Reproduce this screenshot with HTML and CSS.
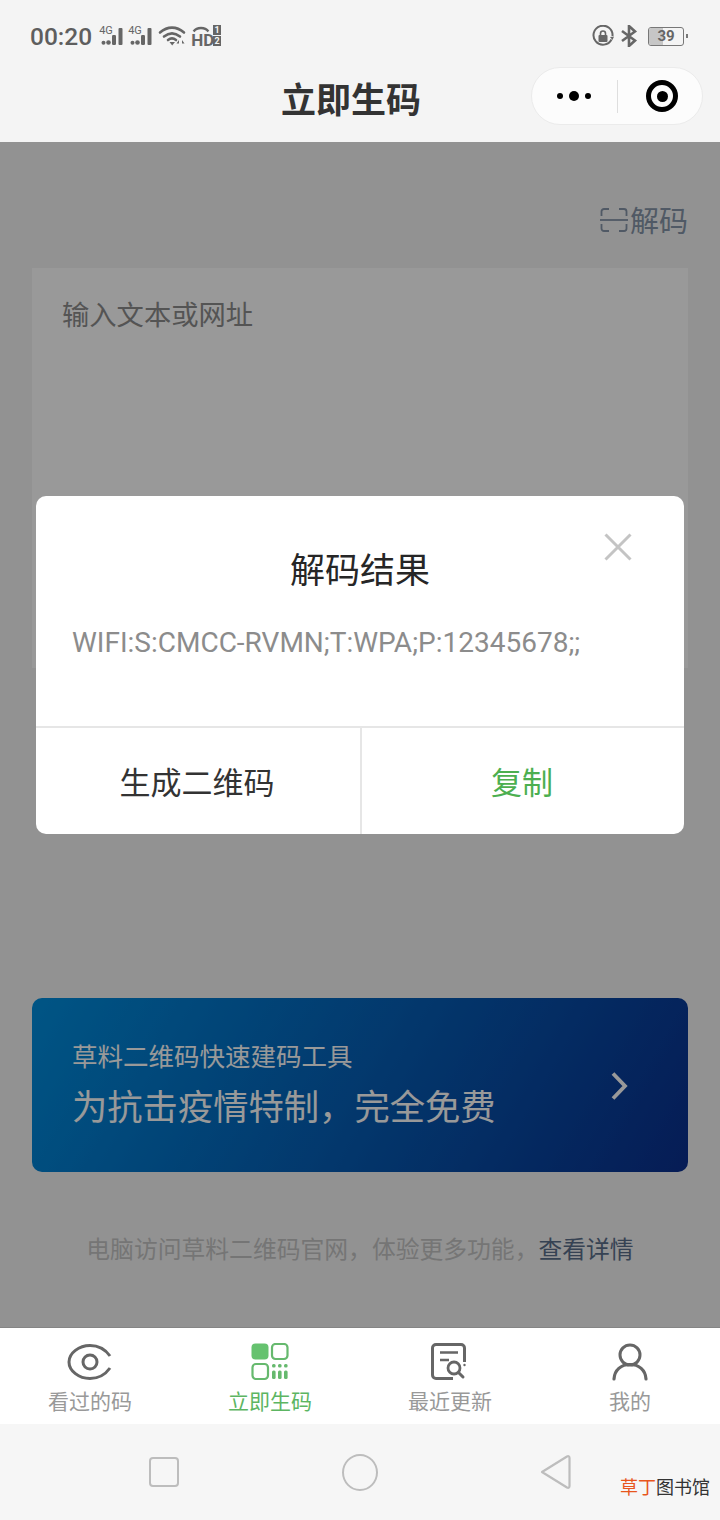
FILE: index.html
```html
<!DOCTYPE html>
<html lang="zh-CN">
<head>
	<meta charset="UTF-8">
	<meta name="viewport" content="width=device-width, initial-scale=1.0">
	<title>立即生码</title>
	<link rel="stylesheet" href="styles.css">
</head>
<body>
	<div class="phone">
		<header class="top">
			<div class="status">
				<span class="time">00:20</span>
				<span class="net"><span class="net-label">4G</span>
					<svg class="bars" viewBox="0 0 22 17"><circle cx="2.500" cy="14.800" r="2"/><circle cx="7.500" cy="14.500" r="2.300"/><rect x="11" y="7" width="4" height="10" rx="1.200"/><rect x="17.500" y="0" width="4" height="17" rx="1"/></svg>
				</span>
				<span class="net"><span class="net-label">4G</span>
					<svg class="bars" viewBox="0 0 22 17"><circle cx="2.500" cy="14.800" r="2"/><circle cx="7.500" cy="14.500" r="2.300"/><rect x="11" y="7" width="4" height="10" rx="1.200"/><rect x="17.500" y="0" width="4" height="17" rx="1"/></svg>
				</span>
				<svg class="wifi" viewBox="0 0 30 22"><path d="M2 7.500C9.500 1 18.500 1 26 7.500M6 11.500C11 7.500 17 7.500 22 11.500M10 15C12.500 13 15.500 13 18 15" fill="none" stroke="#666" stroke-width="2.600" stroke-linecap="round"/><path d="M11.500 17H17L14.200 20.500Z" fill="#666"/><path d="M21 15L18.500 18.500H21V21.500ZM24 15L26.500 18.500H24V21.500Z" fill="#666"/></svg>
				<span class="hd">
					<svg class="hd-arc" viewBox="0 0 22 8"><path d="M2 7C6 1.500 16 1.500 20 7" fill="none" stroke="#666" stroke-width="3"/></svg>
					<span class="hd-text">HD</span>
					<span class="sim"><b>1</b><b>2</b></span>
				</span>
				<span class="status-right">
					<svg class="lock" viewBox="0 0 22 22"><path d="M19.500 14.500A9.500 9.500 0 1 1 20.500 11" fill="none" stroke="#666" stroke-width="2"/><path d="M18 12L20.500 15L22 11.500Z" fill="#666"/><rect x="6.500" y="10" width="9" height="7" rx="1" fill="#666"/><path d="M8.500 10V8.500A2.500 2.500 0 0 1 13.500 8.500V10" fill="none" stroke="#666" stroke-width="1.600"/></svg>
					<svg class="bt" viewBox="0 0 18 22"><path d="M2 6L15 15.500L9 21V1L15 6.500L2 16" fill="none" stroke="#666" stroke-width="2.600"/></svg>
					<span class="battery"><span class="battery-fill"></span><span class="battery-num">39</span></span>
					<span class="battery-tip"></span>
				</span>
			</div>
			<div class="nav">
				<h1 class="nav-title">立即生码</h1>
				<div class="capsule">
					<span class="dots"><i></i><i class="big"></i><i></i></span>
					<span class="capsule-line"></span>
					<span class="target"><i></i></span>
				</div>
			</div>
		</header>

		<main class="content">
			<div class="decode-row">
				<svg class="scan" viewBox="0 0 28 26"><path d="M9 2H4A2.500 2.500 0 0 0 1.500 4.500V9M19 2H24A2.500 2.500 0 0 1 26.500 4.500V9M9 24H4A2.500 2.500 0 0 1 1.500 21.500V17M19 24H24A2.500 2.500 0 0 0 26.500 21.500V17" fill="none" stroke="#8594a8" stroke-width="1.800"/><path d="M0 13H28" stroke="#8594a8" stroke-width="1.800"/></svg>
				<span class="decode-text">解码</span>
			</div>
			<div class="input-box">输入文本或网址</div>
			<div class="banner">
				<div class="banner-text">
					<div class="banner-sub">草料二维码快速建码工具</div>
					<div class="banner-main">为抗击疫情特制，完全免费</div>
				</div>
				<svg class="banner-arrow" viewBox="0 0 18 30"><path d="M3 2.500L15 15L3 27.500" fill="none" stroke="#fff" stroke-width="3.800"/></svg>
			</div>
			<p class="foot-note">电脑访问草料二维码官网，体验更多功能，<span class="foot-link">查看详情</span></p>

			<div class="mask">
				<div class="modal">
					<div class="modal-head">
						<h2 class="modal-title">解码结果</h2>
						<svg class="modal-close" viewBox="0 0 28 28"><path d="M1.500 1.500L26.500 26.500M26.500 1.500L1.500 26.500" stroke="#c4c4c4" stroke-width="3"/></svg>
					</div>
					<div class="modal-body">WIFI:S:CMCC-RVMN;T:WPA;P:12345678;;</div>
					<div class="modal-btns">
						<div class="modal-btn">生成二维码</div>
						<div class="modal-btn green">复制</div>
					</div>
				</div>
			</div>
		</main>

		<nav class="tabs">
			<div class="tab">
				<svg class="tab-icon" viewBox="0 0 46 38"><path d="M43 25C38 32 31 35.500 23 35.500C12 35.500 2 28 2 19C2 10 12 2.500 23 2.500C31 2.500 38 6 43 13" fill="none" stroke="#666" stroke-width="3"/><circle cx="23" cy="19" r="7" fill="none" stroke="#666" stroke-width="3"/></svg>
				<span class="tab-label">看过的码</span>
			</div>
			<div class="tab active">
				<svg class="tab-icon" viewBox="0 0 38 38"><rect x="0.500" y="0.500" width="17" height="16" rx="4" fill="#66c26f"/><rect x="21" y="1" width="15.500" height="15" rx="3.500" fill="none" stroke="#66b96e" stroke-width="2.200"/><rect x="1.500" y="21" width="15.500" height="15" rx="3.500" fill="none" stroke="#66b96e" stroke-width="2.200"/><g fill="#66b96e"><rect x="21" y="21" width="3.600" height="3.600" rx="1.500"/><rect x="21" y="27.500" width="3.600" height="8.500" rx="1.500"/><rect x="27" y="21" width="3.600" height="3.600" rx="1.500"/><rect x="27" y="27.500" width="3.600" height="8.500" rx="1.500"/><rect x="33" y="21" width="3.600" height="3.600" rx="1.500"/><rect x="33" y="27.500" width="3.600" height="8.500" rx="1.500"/></g></svg>
				<span class="tab-label">立即生码</span>
			</div>
			<div class="tab">
				<svg class="tab-icon" viewBox="0 0 38 38"><path d="M22 35.500H5A3.500 3.500 0 0 1 1.500 32V5A3.500 3.500 0 0 1 5 1.500H30A3.500 3.500 0 0 1 33.500 5V19" fill="none" stroke="#666" stroke-width="3"/><path d="M9 9.500H27M9 17H18" stroke="#666" stroke-width="2.600"/><circle cx="23" cy="25" r="6" fill="none" stroke="#666" stroke-width="2.800"/><path d="M27.500 29.500L32 34" stroke="#666" stroke-width="3" stroke-linecap="round"/><circle cx="33.500" cy="22" r="1.200" fill="#666"/></svg>
				<span class="tab-label">最近更新</span>
			</div>
			<div class="tab">
				<svg class="tab-icon" viewBox="0 0 36 38"><circle cx="18" cy="12" r="10" fill="none" stroke="#666" stroke-width="3"/><path d="M2 36C2.500 27 9 21.500 18 21.500C27 21.500 33.500 27 34 36" fill="none" stroke="#666" stroke-width="3.200" stroke-linecap="round"/></svg>
				<span class="tab-label">我的</span>
			</div>
		</nav>

		<footer class="sys-nav">
			<span class="sys-square"></span>
			<span class="sys-circle"></span>
			<svg class="sys-back" viewBox="0 0 32 36"><path d="M2 18L27 2.500C28.500 1.700 29.500 2.500 29.500 4V32C29.500 33.500 28.500 34.300 27 33.500Z" fill="none" stroke="#bdbdbd" stroke-width="2.200" stroke-linejoin="round"/></svg>
			<span class="watermark"><span class="watermark-red">草丁</span>图书馆</span>
		</footer>
	</div>
</body>
</html>
```

FILE: styles.css
```css
* {
	padding: 0;
	margin: 0;
	box-sizing: border-box;
}

body {
	font-family: "Noto Sans CJK SC", "Noto Sans", sans-serif;
	background: #f4f4f4;
}

.phone {
	width: 720px;
	height: 1520px;
	display: flex;
	flex-direction: column;
	overflow: hidden;
}

/* status bar + title */
.top {
	height: 142px;
	background: #f4f4f4;
}

.status {
	height: 66px;
	padding: 20px 32px 0 30px;
	display: flex;
	align-items: flex-start;
	color: #666;
}

.time {
	font-family: Roboto, sans-serif;
	font-size: 24.500px;
	font-weight: 500;
	line-height: 34px;
	color: #5e5e5e;
	margin-right: 7px;
}

.net {
	position: relative;
	width: 24px;
	height: 22px;
	margin: 6px 5px 0 0;
}

.net-label {
	display: block;
	font-family: Roboto, sans-serif;
	font-size: 11px;
	line-height: 10px;
}

.bars {
	position: absolute;
	left: 2px;
	top: 2px;
	width: 22px;
	height: 17px;
	fill: #666;
}

.wifi {
	width: 30px;
	height: 22px;
	margin: 5px 3px 0 1px;
}

.hd {
	position: relative;
	width: 30px;
	height: 22px;
	margin-top: 5px;
}

.hd-arc {
	position: absolute;
	left: 1px;
	top: 0;
	width: 18px;
	height: 8px;
}

.hd-text {
	position: absolute;
	left: 0;
	top: 8px;
	font-family: Roboto, sans-serif;
	font-size: 17px;
	font-weight: 700;
	line-height: 14px;
}

.sim {
	position: absolute;
	right: 0;
	top: 0;
	display: flex;
	flex-direction: column;
	gap: 1px;
}

.sim b {
	width: 8px;
	height: 10px;
	background: #666;
	color: #f4f4f4;
	font: 700 9px/10px Roboto, sans-serif;
	text-align: center;
}

.status-right {
	margin-left: auto;
	display: flex;
	align-items: center;
	height: 32px;
}

.lock {
	width: 22px;
	height: 22px;
	margin-right: 6px;
}

.bt {
	width: 18px;
	height: 22px;
	margin-right: 10px;
}

.battery {
	width: 36px;
	height: 19px;
	border: 1px solid #777;
	border-radius: 3px;
	position: relative;
	overflow: hidden;
}

.battery-fill {
	position: absolute;
	left: 0;
	top: 0;
	bottom: 0;
	width: 14px;
	background: #c6c6c6;
}

.battery-num {
	position: absolute;
	left: 0;
	right: 0;
	top: 0;
	text-align: center;
	font: 700 15px/17px Roboto, sans-serif;
	color: #666;
}

.battery-tip {
	width: 2px;
	height: 4px;
	margin-left: 2px;
	background: #777;
}

.nav {
	height: 76px;
	display: flex;
	align-items: flex-start;
}

.nav-title {
	margin: 7px 0 0 281px;
	font-size: 35px;
	font-weight: 700;
	line-height: 50px;
	color: #333;
}

.capsule {
	margin: 1px 17px 0 auto;
	width: 172px;
	height: 58px;
	border: 1px solid #ebebeb;
	border-radius: 29px;
	background: #fcfcfc;
	display: flex;
	align-items: center;
}

.dots {
	width: 83px;
	margin-right: 1px;
	display: flex;
	align-items: center;
	justify-content: center;
	gap: 6px;
}

.dots i {
	width: 6px;
	height: 6px;
	border-radius: 50%;
	background: #000;
}

.dots i.big {
	width: 10px;
	height: 10px;
}

.capsule-line {
	width: 1px;
	height: 33px;
	margin-left: 1px;
	background: #dedede;
}

.target {
	margin-left: 28px;
	width: 32px;
	height: 32px;
	border: 5px solid #000;
	border-radius: 50%;
	display: flex;
	align-items: center;
	justify-content: center;
}

.target i {
	width: 11px;
	height: 11px;
	border-radius: 50%;
	background: #000;
}

/* page behind the dialog */
.content {
	flex: 1;
	position: relative;
	background: #f4f4f4;
	padding: 0 32px;
	display: flex;
	flex-direction: column;
}

.decode-row {
	height: 126px;
	padding-top: 56px;
	display: flex;
	justify-content: flex-end;
	align-items: flex-start;
	color: #8594a8;
}

.scan {
	width: 28px;
	height: 26px;
	margin: 9px 2px 0 0;
}

.decode-text {
	font-size: 29px;
	line-height: 42px;
}

.input-box {
	height: 400px;
	background: #fff;
	padding: 25px 30px;
	font-size: 27.300px;
	line-height: 40px;
	color: #8c8c8c;
}

.banner {
	margin-top: 330px;
	height: 174px;
	border-radius: 10px;
	background: linear-gradient(120deg, #008ede, #0a2f8e);
	padding: 0 60px 0 40px;
	display: flex;
	align-items: center;
	justify-content: space-between;
}

.banner-text {
	padding-bottom: 2px;
}

.banner-sub {
	font-size: 25.500px;
	line-height: 36px;
	color: #fff;
}

.banner-main {
	margin-top: 6px;
	font-size: 35.300px;
	line-height: 52px;
	color: #fff;
}

.banner-arrow {
	width: 18px;
	height: 30px;
	margin-top: 2px;
}

.foot-note {
	margin-top: 58px;
	text-align: center;
	font-size: 23.800px;
	line-height: 36px;
	color: #c4c4c4;
}

.foot-link {
	color: #5b6f8b;
}

/* dialog */
.mask {
	position: absolute;
	inset: 0;
	background: rgba(0, 0, 0, 0.4);
	padding: 354px 36px 0;
}

.modal {
	height: 338px;
	background: #fff;
	border-radius: 10px;
	display: flex;
	flex-direction: column;
	overflow: hidden;
}

.modal-head {
	position: relative;
	height: 118px;
	padding-top: 46px;
	text-align: center;
}

.modal-title {
	font-size: 35px;
	font-weight: 400;
	line-height: 52px;
	color: #262626;
}

.modal-close {
	position: absolute;
	right: 52px;
	top: 37px;
	width: 28px;
	height: 28px;
}

.modal-body {
	flex: 1;
	padding: 11px 36px 0;
	font-family: Roboto, sans-serif;
	font-size: 28px;
	line-height: 36px;
	color: #8c8c8c;
}

.modal-btns {
	height: 108px;
	border-top: 2px solid #e6e6e6;
	display: grid;
	grid-template-columns: 326px 1fr;
}

.modal-btn {
	padding: 0 2px 2px 0;
	display: flex;
	align-items: center;
	justify-content: center;
	font-size: 31px;
	color: #333;
}

.modal-btn:first-child {
	border-right: 2px solid #e6e6e6;
}

.modal-btn.green {
	color: #4caf50;
}

/* tab bar */
.tabs {
	height: 97px;
	background: #fff;
	border-top: 1px solid #858585;
	display: grid;
	grid-template-columns: repeat(4, 180px);
}

.tab {
	display: flex;
	flex-direction: column;
	align-items: center;
	padding-top: 15px;
}

.tab-icon {
	height: 38px;
}

.tab-label {
	margin-top: 3px;
	font-size: 21px;
	line-height: 32px;
	color: #999;
}

.tab.active .tab-label {
	color: #5cb562;
}

/* android keys */
.sys-nav {
	height: 96px;
	background: #f6f6f6;
	position: relative;
	display: flex;
	align-items: flex-start;
	padding: 30px 0 0 149px;
}

.sys-square {
	width: 30px;
	height: 30px;
	margin-top: 3px;
	border: 2px solid #bdbdbd;
	border-radius: 4px;
}

.sys-circle {
	width: 36px;
	height: 37px;
	margin-left: 163px;
	border: 2px solid #bdbdbd;
	border-radius: 50%;
}

.sys-back {
	width: 32px;
	height: 36px;
	margin-left: 162px;
}

.watermark {
	position: absolute;
	left: 620px;
	top: 50px;
	font-size: 18px;
	line-height: 24px;
	color: #333;
}

.watermark-red {
	color: #e8561d;
}
```
